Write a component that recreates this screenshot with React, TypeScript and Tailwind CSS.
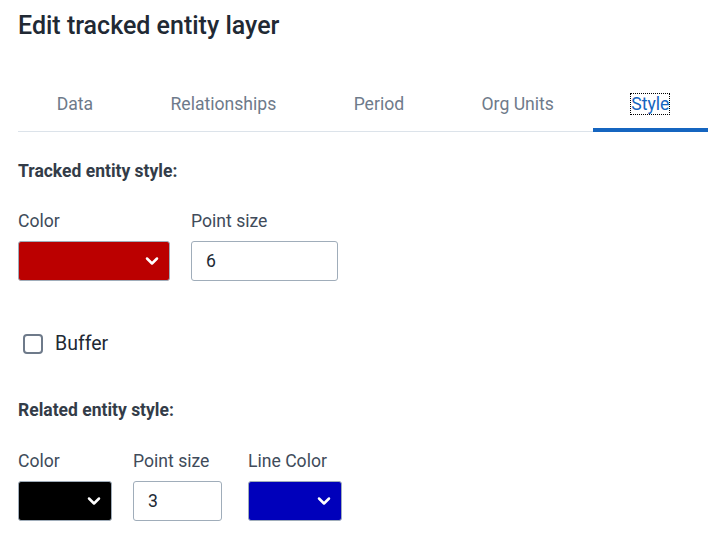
import { ChevronDown } from "lucide-react";

const tabs = ["Data", "Relationships", "Period", "Org Units", "Style"];

function ColorSelect({ color, width }: { color: string; width: string }) {
  return (
    <div
      className={`${width} ${color} h-10 rounded-[3px] border border-[#a0adba] flex items-center justify-end pr-[7px]`}
    >
      <ChevronDown className="w-5 h-5 text-white" strokeWidth={3} />
    </div>
  );
}

function NumberInput({ value, width }: { value: string; width: string }) {
  return (
    <div
      className={`${width} h-10 rounded-[3px] border border-[#a0adba] bg-white flex items-center px-[14px] text-[17.6px] text-[#212934]`}
    >
      {value}
    </div>
  );
}

export default function App() {
  return (
    <div className="w-[718px] h-[544px] bg-white font-['Roboto',sans-serif] overflow-hidden">
      <div className="pl-[18px] pr-[10px]">
        <h1 className="pt-[11px] text-[25px] font-medium leading-[30px] text-[#212934]">
          Edit tracked entity layer
        </h1>

        {/* Tabs */}
        <div className="mt-[45px] flex border-b border-[#dce3ea]">
          {tabs.map((t) => (
            <div
              key={t}
              className={`flex-auto text-center text-[17.6px] leading-[20px] pt-[8px] pb-[14px] border-b-4 -mb-px ${
                t === "Style"
                  ? "border-[#1565c0] text-[#1565c0]"
                  : "border-transparent text-[#6e7a8a]"
              }`}
            >
              <span
                className={
                  t === "Style" ? "outline outline-1 outline-dotted outline-black" : ""
                }
              >
                {t}
              </span>
            </div>
          ))}
        </div>

        {/* Tracked entity style */}
        <div className="mt-[29px] text-[17.5px] font-bold text-[#333c48] leading-5">
          Tracked entity style:
        </div>
        <div className="mt-[30px] flex gap-[21px]">
          <div>
            <div className="text-[17.6px] text-[#404b5a] leading-5 mb-[10px]">Color</div>
            <ColorSelect color="bg-[#bb0000]" width="w-[152px]" />
          </div>
          <div>
            <div className="text-[17.6px] text-[#404b5a] leading-5 mb-[10px]">Point size</div>
            <NumberInput value="6" width="w-[147px]" />
          </div>
        </div>

        <div className="mt-[51px] flex items-center gap-3 pl-[5px]">
          <div className="w-5 h-5 rounded-[4px] border-2 border-[#6e7a8a]" />
          <span className="text-[19.5px] text-[#212934] leading-6">Buffer</span>
        </div>

        {/* Related entity style */}
        <div className="mt-[44px] text-[17.5px] font-bold text-[#333c48] leading-5">
          Related entity style:
        </div>
        <div className="mt-[31px] flex">
          <div>
            <div className="text-[17.6px] text-[#404b5a] leading-5 mb-[10px]">Color</div>
            <ColorSelect color="bg-black" width="w-[94px]" />
          </div>
          <div className="ml-[21px]">
            <div className="text-[17.6px] text-[#404b5a] leading-5 mb-[10px]">Point size</div>
            <NumberInput value="3" width="w-[89px]" />
          </div>
          <div className="ml-[26px]">
            <div className="text-[17.6px] text-[#404b5a] leading-5 mb-[10px]">Line Color</div>
            <ColorSelect color="bg-[#0000bb]" width="w-[94px]" />
          </div>
        </div>
      </div>
    </div>
  );
}
